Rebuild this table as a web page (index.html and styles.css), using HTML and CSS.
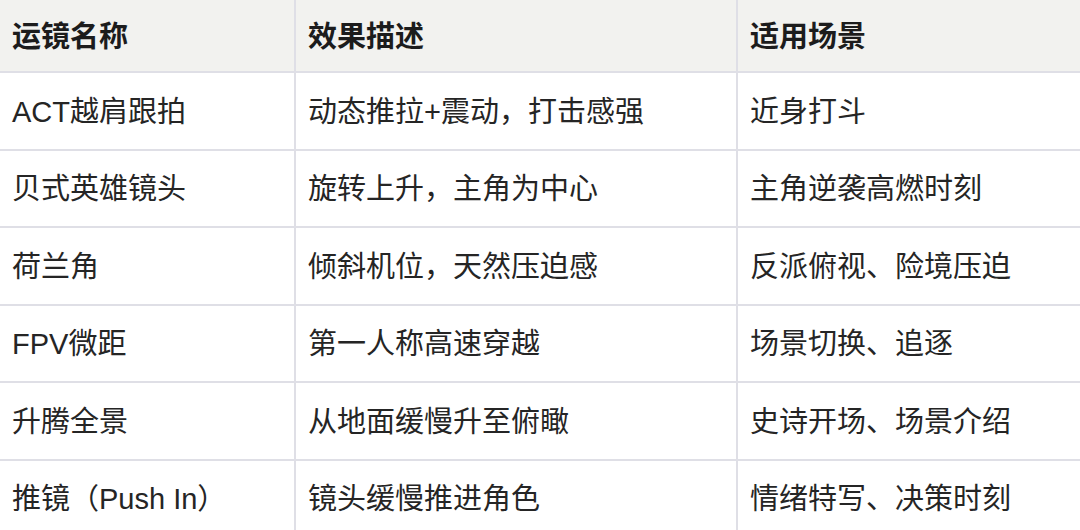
FILE: index.html
```html
<!DOCTYPE html>
<html lang="zh-CN">
<head>
<meta charset="utf-8">
<title>运镜</title>
<link rel="stylesheet" href="styles.css">
</head>
<body>
<div class="table">
  <div class="row head">
    <div class="cell">运镜名称</div>
    <div class="cell">效果描述</div>
    <div class="cell">适用场景</div>
  </div>
  <div class="row">
    <div class="cell">ACT越肩跟拍</div>
    <div class="cell">动态推拉+震动，打击感强</div>
    <div class="cell">近身打斗</div>
  </div>
  <div class="row">
    <div class="cell">贝式英雄镜头</div>
    <div class="cell">旋转上升，主角为中心</div>
    <div class="cell">主角逆袭高燃时刻</div>
  </div>
  <div class="row">
    <div class="cell">荷兰角</div>
    <div class="cell">倾斜机位，天然压迫感</div>
    <div class="cell">反派俯视、险境压迫</div>
  </div>
  <div class="row">
    <div class="cell">FPV微距</div>
    <div class="cell">第一人称高速穿越</div>
    <div class="cell">场景切换、追逐</div>
  </div>
  <div class="row">
    <div class="cell">升腾全景</div>
    <div class="cell">从地面缓慢升至俯瞰</div>
    <div class="cell">史诗开场、场景介绍</div>
  </div>
  <div class="row">
    <div class="cell">推镜（Push In）</div>
    <div class="cell">镜头缓慢推进角色</div>
    <div class="cell">情绪特写、决策时刻</div>
  </div>
</div>
</body>
</html>
```

FILE: styles.css
```css
html, body {
  margin: 0;
  padding: 0;
  background: #ffffff;
}
body {
  font-family: "Liberation Sans", "Noto Sans CJK SC", sans-serif;
  color: #252525;
  font-size: 29px;
  overflow: hidden;
}
.table {
  width: 1080px;
}
.row {
  display: grid;
  grid-template-columns: 296px 442px 1fr;
  height: 77.5px;
  box-sizing: border-box;
  border-bottom: 2px solid #dfdfe6;
}
.row.head {
  height: 73px;
  background: #f2f2ef;
  font-weight: bold;
  color: #1c1c1c;
}
.cell {
  display: flex;
  align-items: center;
  padding-left: 12px;
  padding-bottom: 4px;
  box-sizing: border-box;
  white-space: nowrap;
}
.cell:not(:last-child) {
  border-right: 2px solid #dfdfe6;
}
```
